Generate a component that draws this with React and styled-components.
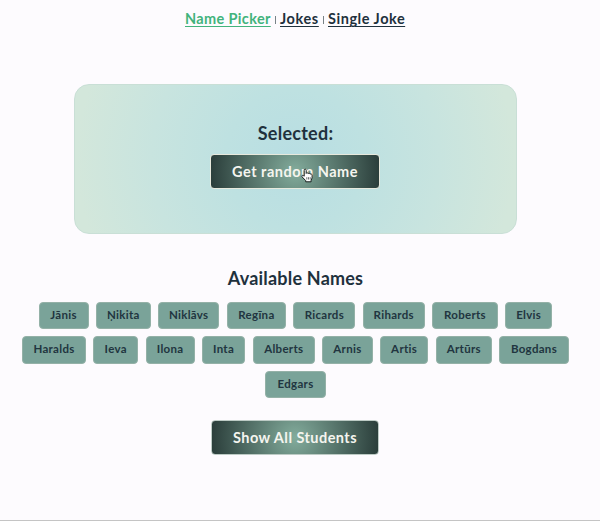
import React from "react";
import styled, { createGlobalStyle } from "styled-components";

const GlobalStyle = createGlobalStyle`
  * { box-sizing: border-box; }
  body {
    margin: 0;
    background: #fdfbfe;
    color: #213547;
    font-family: Lato, "Open Sans", sans-serif;
  }
`;

const Page = styled.div`
  display: flex;
  flex-direction: column;
  align-items: center;
  height: 521px;
  padding-right: 9px;
  border-bottom: 1px solid #c4c4c4;
  color: #1f313d;
  overflow: hidden;
`;

const Nav = styled.nav`
  display: flex;
  justify-content: center;
  align-items: baseline;
  gap: 3px;
  height: 22px;
  margin-top: 8px;
  font-size: 10px;
  line-height: 22px;
`;

const NavLink = styled.a`
  width: ${(p) => p.$width}px;
  white-space: nowrap;
  color: ${(p) => (p.$active ? "#42b37c" : "#1f313d")};
  font-size: 14.5px;
  font-weight: 700;
  letter-spacing: ${(p) => p.$spacing}px;
  text-decoration: underline;
  text-decoration-thickness: 1px;
  text-underline-offset: 2px;
`;

const Divider = styled.span`
  align-self: center;
  width: 1px;
  height: 8px;
  margin: 1px 1px 0;
  background: #788287;
`;

const Card = styled.section`
  display: flex;
  flex-direction: column;
  align-items: center;
  width: 443px;
  height: 150px;
  margin-top: 54px;
  padding-top: 36px;
  border: 1px solid #c9dfd6;
  border-radius: 15px;
  background: radial-gradient(circle, #b8dee3 0%, #bee1e1 30%, #c8e4df 62%, #d3e7db 94%);
`;

const Heading = styled.h2`
  margin: 0;
  font-size: 18px;
  font-weight: 700;
  line-height: 24px;
  letter-spacing: ${(p) => p.$spacing}px;
  white-space: nowrap;
`;

const ActionButton = styled.button`
  position: relative;
  width: ${(p) => p.$width}px;
  height: 35px;
  margin-top: ${(p) => p.$top}px;
  margin-right: 1px;
  padding: 0;
  border: 1px solid ${(p) => p.$border};
  border-radius: 4px;
  background: radial-gradient(circle, #83ac9c 0%, #2a3d3a 100%);
  color: #f5f5ef;
  font: 700 14.5px/32px Lato, "Open Sans", sans-serif;
  letter-spacing: ${(p) => p.$spacing}px;
  white-space: nowrap;
`;

const Pointer = styled.svg`
  position: absolute;
  left: 90px;
  top: 13px;
  width: 13px;
  height: 15px;
`;

const Names = styled.section`
  display: flex;
  flex-direction: column;
  align-items: center;
  margin-top: 32px;
`;

const NameList = styled.div`
  display: flex;
  flex-direction: column;
  gap: 7px;
  margin-top: 11.5px;
`;

const NameRow = styled.div`
  display: flex;
  justify-content: center;
  gap: 7.2px;
`;

const Chip = styled.div`
  width: ${(p) => p.$width}px;
  height: 27.5px;
  border: 1px solid #94b1a7;
  border-radius: 4px;
  background: #7aa399;
  color: #213540;
  font-size: 11.5px;
  font-weight: 700;
  line-height: 24px;
  letter-spacing: 0.3px;
  text-align: center;
  white-space: nowrap;
`;

const rows = [
  [["Jānis", 50], ["Ņikita", 55], ["Niklāvs", 61.5], ["Regīna", 59.5], ["Ricards", 62], ["Rihards", 62.5], ["Roberts", 65.5], ["Elvis", 47.5]],
  [["Haralds", 63.5], ["Ieva", 45.5], ["Ilona", 49], ["Inta", 43.5], ["Alberts", 62.5], ["Arnis", 50.5], ["Artis", 48.5], ["Artūrs", 56.5], ["Bogdans", 69.5]],
  [["Edgars", 60.5]],
];

export default function App() {
  return (
    <>
      <GlobalStyle />
      <Page>
        <Nav>
          <NavLink $active $width={86} $spacing={0.35}>Name Picker</NavLink>
          <Divider />
          <NavLink $width={39} $spacing={0.6}>Jokes</NavLink>
          <Divider />
          <NavLink $width={78} $spacing={0.53}>Single Joke</NavLink>
        </Nav>
        <Card>
          <Heading $spacing={0.25}>Selected:</Heading>
          <ActionButton $width={170} $top={9} $border="#e7e9dd" $spacing={0.5}>
            Get random Name
            <Pointer viewBox="0 0 13 15" aria-hidden="true">
              <path
                d="M3.2 8.2V2.3c0-1.5 2-1.5 2 0v3.1c.3-.9 1.8-.8 2 .2.5-.7 1.8-.4 1.9.5.8-.5 2 0 2 1.1v2.2c0 1.2-.7 1.8-1 2.8v1.6H4.7v-1.2L1.1 8.9c-.8-1.1.5-2.1 1.3-1.3z"
                fill="#fff"
                stroke="#18201f"
                strokeLinejoin="round"
              />
              <path d="M5.8 9.2v2.3M7.5 9.2v2.3M9.2 9.2v2.3" fill="none" stroke="#303837" strokeWidth="0.7" />
            </Pointer>
          </ActionButton>
        </Card>
        <Names>
          <Heading $spacing={0.2}>Available Names</Heading>
          <NameList>
            {rows.map((row) => (
              <NameRow key={row[0][0]}>
                {row.map(([name, width]) => (
                  <Chip key={name} $width={width}>{name}</Chip>
                ))}
              </NameRow>
            ))}
          </NameList>
        </Names>
        <ActionButton $width={168} $top={22} $border="#bdcbc5" $spacing={0.45}>
          Show All Students
        </ActionButton>
      </Page>
    </>
  );
}
